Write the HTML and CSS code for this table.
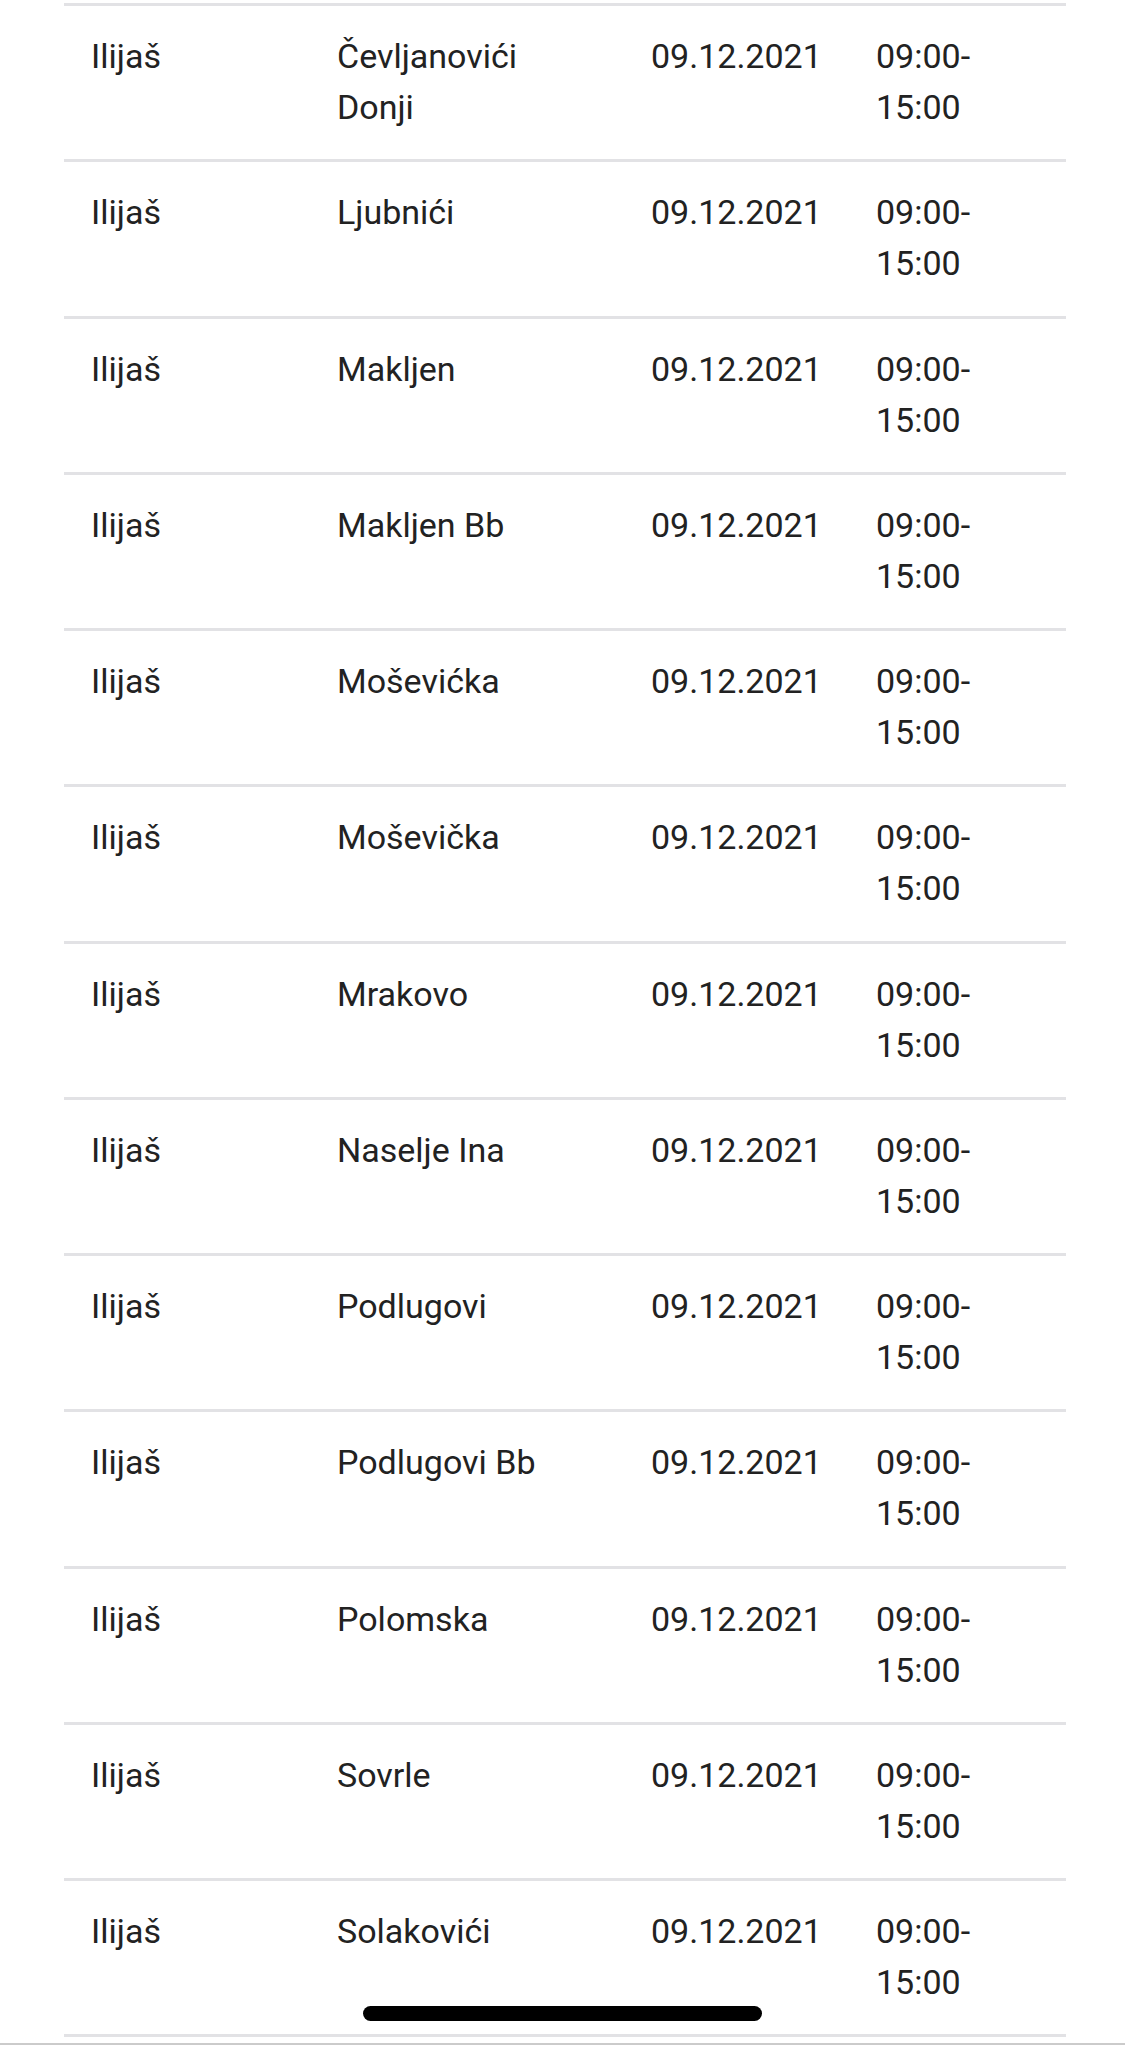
FILE: index.html
```html
<!DOCTYPE html>
<html lang="bs">

<head>
    <meta charset="UTF-8">
    <meta name="viewport" content="width=device-width, initial-scale=1.0">
    <title>Isključenja struje</title>
    <link rel="stylesheet" href="styles.css">
</head>

<body>
    <table class="outages">
        <colgroup>
            <col class="col-town">
            <col class="col-street">
            <col class="col-date">
            <col class="col-time">
        </colgroup>
        <tbody>
            <tr><td>Ilijaš</td><td>Čevljanovići Donji</td><td>09.12.2021</td><td>09:00-15:00</td></tr>
            <tr><td>Ilijaš</td><td>Ljubnići</td><td>09.12.2021</td><td>09:00-15:00</td></tr>
            <tr><td>Ilijaš</td><td>Makljen</td><td>09.12.2021</td><td>09:00-15:00</td></tr>
            <tr><td>Ilijaš</td><td>Makljen Bb</td><td>09.12.2021</td><td>09:00-15:00</td></tr>
            <tr><td>Ilijaš</td><td>Moševićka</td><td>09.12.2021</td><td>09:00-15:00</td></tr>
            <tr><td>Ilijaš</td><td>Moševička</td><td>09.12.2021</td><td>09:00-15:00</td></tr>
            <tr><td>Ilijaš</td><td>Mrakovo</td><td>09.12.2021</td><td>09:00-15:00</td></tr>
            <tr><td>Ilijaš</td><td>Naselje Ina</td><td>09.12.2021</td><td>09:00-15:00</td></tr>
            <tr><td>Ilijaš</td><td>Podlugovi</td><td>09.12.2021</td><td>09:00-15:00</td></tr>
            <tr><td>Ilijaš</td><td>Podlugovi Bb</td><td>09.12.2021</td><td>09:00-15:00</td></tr>
            <tr><td>Ilijaš</td><td>Polomska</td><td>09.12.2021</td><td>09:00-15:00</td></tr>
            <tr><td>Ilijaš</td><td>Sovrle</td><td>09.12.2021</td><td>09:00-15:00</td></tr>
            <tr><td>Ilijaš</td><td>Solakovići</td><td>09.12.2021</td><td>09:00-15:00</td></tr>
        </tbody>
    </table>

    <div class="home-indicator"></div>
    <div class="screen-edge"></div>
</body>

</html>
```

FILE: styles.css
```css
body {
    font-family: Roboto, 'Liberation Sans', Arial, sans-serif;
    margin: 0;
    padding: 0;
    background-color: #ffffff;
    color: #222222;
}

.outages {
    margin: 3px 0 0 64px;
    width: 1002px;
    table-layout: fixed;
    border-collapse: collapse;
    border-bottom: 3px solid #e2e2e5;
    font-size: 34px;
    line-height: 51px;
}

.col-town {
    width: 249px;
}

.col-street {
    width: 314px;
}

.col-date {
    width: 225px;
}

.col-time {
    width: 214px;
}

.outages tr {
    border-top: 3px solid #e2e2e5;
}

.outages td {
    vertical-align: top;
    padding: 25px 24px 26.25px 24px;
    height: 102px;
    box-sizing: content-box;
}

.outages td:first-child {
    padding-left: 27px;
}

.outages td:nth-child(2) {
    padding-right: 40px;
}

.home-indicator {
    position: fixed;
    left: 50%;
    bottom: 24px;
    width: 399px;
    height: 15px;
    margin-left: -200px;
    border-radius: 8px;
    background-color: #000000;
}

.screen-edge {
    position: fixed;
    left: 0;
    right: 0;
    bottom: 0;
    height: 2px;
    background-color: #cbcbcb;
}
```
